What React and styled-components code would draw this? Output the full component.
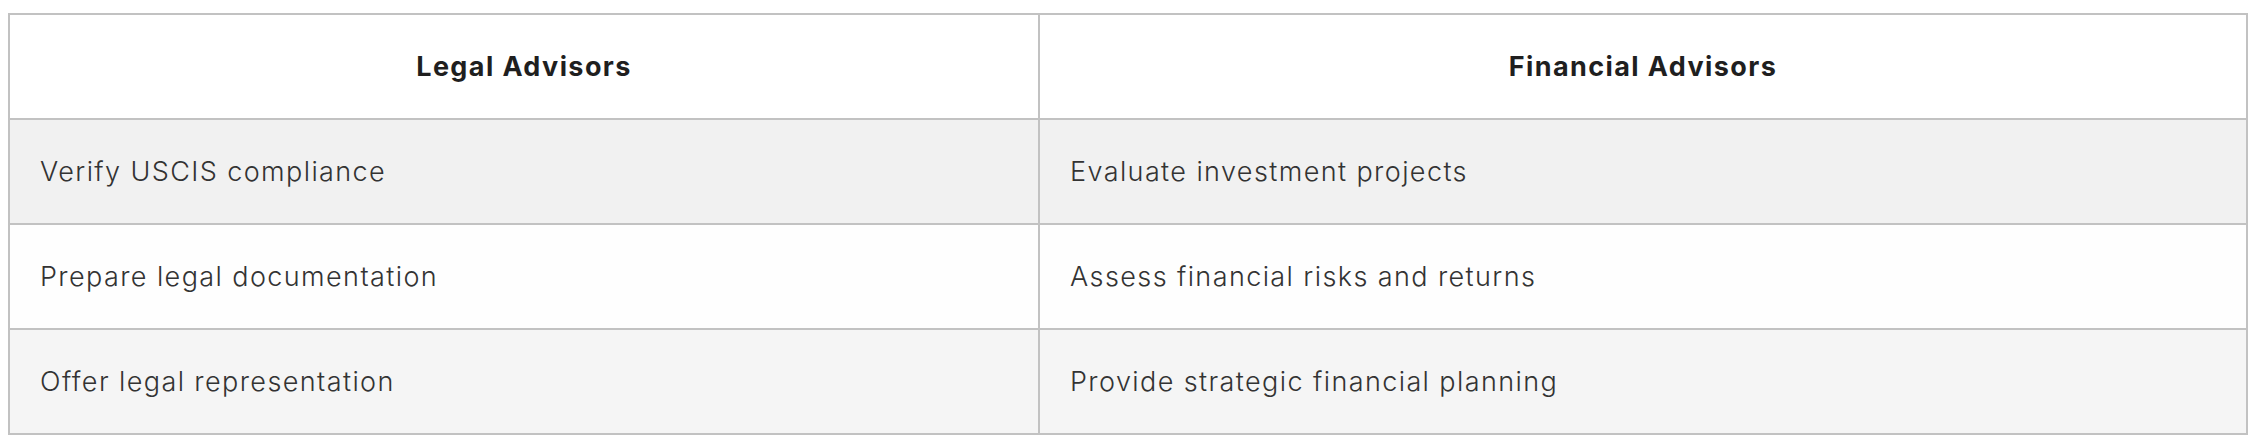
import React from "react";
import styled, { createGlobalStyle } from "styled-components";

const GlobalStyle = createGlobalStyle`
  html, body {
    margin: 0;
    padding: 0;
    background: #ffffff;
  }
  body {
    font-family: "Inter", "Open Sans", sans-serif;
    color: #222222;
  }
`;

const rows = [
  ["Verify USCIS compliance", "Evaluate investment projects"],
  ["Prepare legal documentation", "Assess financial risks and returns"],
  ["Offer legal representation", "Provide strategic financial planning"],
];

const rowColors = ["#f1f1f1", "#fefefe", "#f5f5f5"];

const Page = styled.div`
  padding: 13px 10px 0 8px;
`;

const Table = styled.div`
  display: grid;
  grid-template-columns: 1030px 1208px;
  border-top: 2px solid #c2c2c2;
  border-left: 2px solid #c2c2c2;
  width: max-content;
`;

const Cell = styled.div`
  box-sizing: border-box;
  height: 105px;
  display: flex;
  align-items: center;
  border-right: 2px solid #c2c2c2;
  border-bottom: 2px solid #c2c2c2;
  background: ${(props) => props.bg || "#ffffff"};
  font-size: 27px;
  letter-spacing: 1.4px;
`;

const HeadCell = styled(Cell)`
  justify-content: center;
  font-weight: 700;
  color: #1f1f1f;
`;

const BodyCell = styled(Cell)`
  padding-left: 30px;
  font-weight: 300;
  color: #333333;
`;

const App = () => {
  return (
    <React.Fragment>
      <GlobalStyle />
      <Page>
        <Table>
          <HeadCell>Legal Advisors</HeadCell>
          <HeadCell>Financial Advisors</HeadCell>
          {rows.map((row, i) =>
            row.map((text, j) => (
              <BodyCell key={`${i}-${j}`} bg={rowColors[i]}>
                {text}
              </BodyCell>
            ))
          )}
        </Table>
      </Page>
    </React.Fragment>
  );
};

export default App;
